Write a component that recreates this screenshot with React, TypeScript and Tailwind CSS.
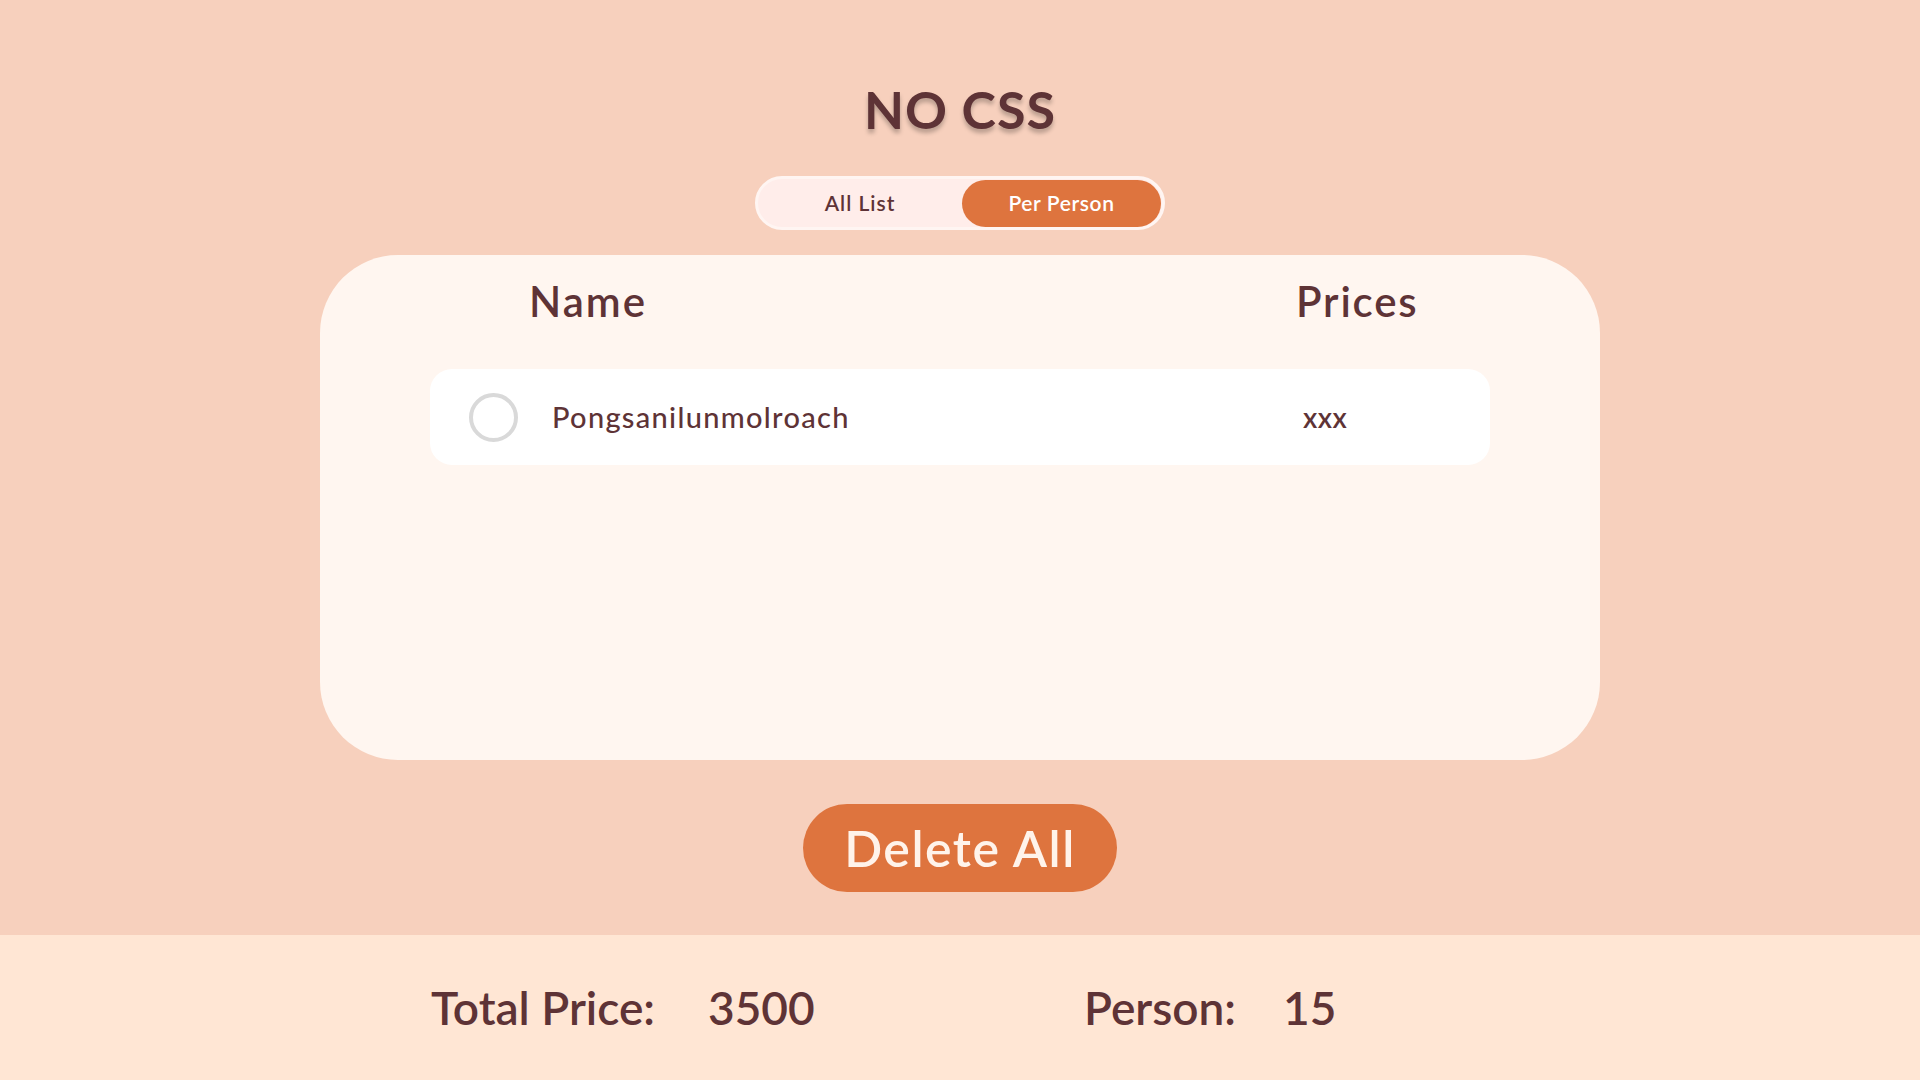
export default function App() {
  return (
    <div
      className="min-h-screen w-full flex flex-col bg-[#F7D0BD] text-[#5E3336]"
      style={{ fontFamily: "Lato, 'Noto Sans', sans-serif" }}
    >
      <main className="h-[935px] flex flex-col items-center">
        <h1 className="mt-[83px] text-[52px] leading-[52px] font-bold tracking-[1px] [text-shadow:0_4px_4px_rgba(0,0,0,0.25)]">
          NO CSS
        </h1>

        <div className="mt-[41px] w-[410px] h-[54px] rounded-full bg-[#FFEDEA] border-[3px] border-[#FFF5F2] flex items-center">
          <button className="w-[204px] h-full text-[21px] font-semibold tracking-[1px] text-[#5E3336]">
            All List
          </button>
          <button className="w-[199px] h-[47px] rounded-full bg-[#DE743E] text-[21px] font-semibold tracking-[0.6px] text-white">
            Per Person
          </button>
        </div>

        <section className="mt-[25px] w-[1280px] h-[505px] rounded-[78px] bg-[#FFF6F0] flex flex-col">
          <div className="flex pt-[22px] h-[114px]">
            <div className="ml-[209px] w-[767px] text-[42px] leading-[48px] font-semibold tracking-[2px]">Name</div>
            <div className="text-[42px] leading-[48px] font-semibold tracking-[1.8px]">Prices</div>
          </div>
          <div className="mx-[110px] h-[96px] rounded-[22px] bg-white flex items-center pl-[39px]">
            <div className="w-[49px] h-[49px] rounded-full border-[4px] border-[#D9D9D9] shrink-0" />
            <div className="ml-[34px] w-[751px] text-[29px] font-medium tracking-[1.3px]">Pongsanilunmolroach</div>
            <div className="text-[28px] font-semibold tracking-[0.5px]">xxx</div>
          </div>
        </section>

        <button className="mt-[44px] w-[314px] h-[88px] rounded-full bg-[#DE743E] text-[50px] leading-none font-semibold text-[#FFF3EA] tracking-[1.5px]">
          Delete All
        </button>
      </main>

      <footer className="h-[145px] bg-[#FFE6D4] flex items-center text-[46px] font-semibold">
        <span className="ml-[431px] w-[277px]">Total Price:</span>
        <span className="w-[376px]">3500</span>
        <span className="w-[199px]">Person:</span>
        <span>15</span>
      </footer>
    </div>
  );
}
